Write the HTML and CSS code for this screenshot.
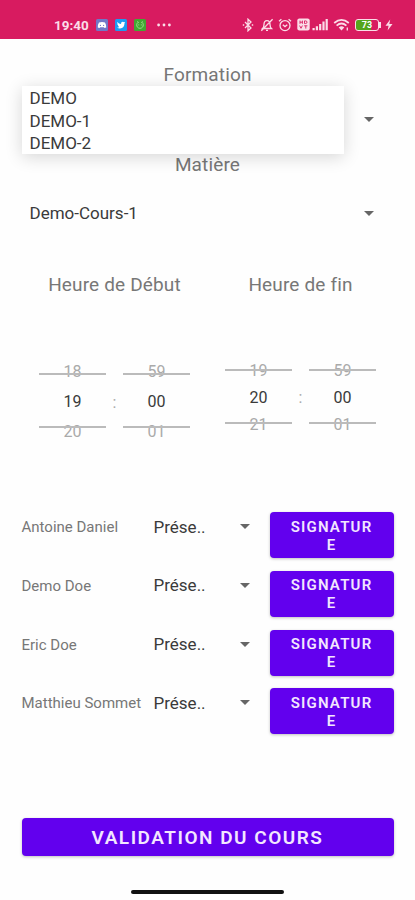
FILE: index.html
```html
<!DOCTYPE html>
<html lang="fr">
<head>
    <meta charset="UTF-8">
    <meta name="viewport" content="width=device-width, initial-scale=1.0">
    <title>Validation du cours</title>
    <link rel="stylesheet" href="styles.css">
</head>
<body>
    <div class="status-bar">
        <div class="status-left">
            <span class="clock">19:40</span>
            <svg class="app-icon" viewBox="0 0 12 12">
                <rect width="12" height="12" rx="1.5" fill="#7078c8"/>
                <path d="M3 3.6Q6 2.6 9 3.6Q10.4 6 10.2 8.6L8.5 9L7.8 8.2H4.2L3.5 9L1.8 8.6Q1.6 6 3 3.6Z" fill="#fff"/>
                <circle cx="4.4" cy="6.4" r=".6" fill="#7078c8"/>
                <circle cx="7.6" cy="6.4" r=".6" fill="#7078c8"/>
            </svg>
            <svg class="app-icon" viewBox="0 0 12 12">
                <rect width="12" height="12" rx="1.5" fill="#1d9bf0"/>
                <path d="M2.3 3Q3.8 4.9 6 4.9Q5.9 2.7 7.7 2.7Q8.5 2.7 9 3.3L10.2 3L9.5 4.3Q9.5 9.4 5 9.5Q3.3 9.5 2 8.7Q3.5 8.7 4.3 8Q3.1 7.6 2.9 6.6L3.5 6.5Q2.3 5.8 2.3 4.8L2.8 5Q1.8 4 2.3 3Z" fill="#fff"/>
            </svg>
            <svg class="app-icon" viewBox="0 0 12 12">
                <rect width="12" height="12" rx="1.5" fill="#43a832"/>
                <path d="M4 3.4A3.3 3.3 0 1 0 8 3.4M3.5 2.3L4.5 3.8M8.5 2.3L7.5 3.8M4.7 5.4V6.4M7.3 5.4V6.4" fill="none" stroke="#a5dc95" stroke-width=".9"/>
            </svg>
            <svg class="dots" viewBox="0 0 14 4">
                <circle cx="1.6" cy="2" r="1.4"/>
                <circle cx="7" cy="2" r="1.4"/>
                <circle cx="12.4" cy="2" r="1.4"/>
            </svg>
        </div>
        <div class="status-right">
            <svg class="line-icon bluetooth" viewBox="0 0 12 14">
                <path d="M3 4L9 10L6 12.8V1.2L9 4L3 10"/>
                <path d="M.8 7H2.2M9.8 7H11.2" stroke-width="1.6"/>
            </svg>
            <svg class="line-icon bell" viewBox="0 0 14 14">
                <path d="M2.5 10.5Q4 9 4 6.5Q4 2.6 7 2.6Q10 2.6 10 6.5Q10 9 11.5 10.5ZM6 12.4H8M12.6 1.2L1.3 12.8"/>
            </svg>
            <svg class="line-icon alarm" viewBox="0 0 14 14">
                <circle cx="7" cy="7.6" r="5"/>
                <path d="M1 3.2L3.4 1.2M13 3.2L10.6 1.2M4.8 6.7L7 8.6L9.3 6.7"/>
            </svg>
            <svg class="volte" viewBox="0 0 13 13">
                <rect x=".3" y=".5" width="12.4" height="12" rx="2" fill="#fbdde8"/>
                <path d="M3 2.6V5.8M5.4 2.6V5.8M3 4.2H5.4M7.5 2.9H8.5Q10 2.9 10 4.2Q10 5.5 8.5 5.5H7.5ZM2.6 7.6L4 10.3L5.4 7.6M7.2 7.8H10.4M8.8 7.8V10.6" fill="none" stroke="#d81b60" stroke-width=".9"/>
            </svg>
            <svg class="signal" viewBox="0 0 16 13">
                <path d="M.5 10H2.7V12.3H.5ZM3.8 8.2H6V12.3H3.8ZM7.1 6H9.3V12.3H7.1ZM10.4 3.6H12.6V12.3H10.4ZM13.6 1H15.8V12.3H13.6Z"/>
            </svg>
            <svg class="line-icon wifi" viewBox="0 0 18 14">
                <path d="M1.2 5Q8.5 -1.2 15.8 5M3.6 7.6Q8.5 3.4 13.4 7.6" stroke-width="1.8"/>
                <path d="M5.7 9.4Q8.5 7.2 11.3 9.4L8.5 12.4Z" fill="#fbdde8" stroke="none"/>
                <path d="M14.3 9.5V12.5"/>
            </svg>
            <div class="battery"><span>73</span></div>
            <svg class="bolt" viewBox="0 0 8 12">
                <path d="M5.2 .6L.5 6.8H3.6L2.6 11.4L7.5 5H4.3Z"/>
            </svg>
        </div>
    </div>

    <div class="content">
        <div class="label">Formation</div>
        <div class="spinner formation">
            <div class="dropdown">
                <div>DEMO</div>
                <div>DEMO-1</div>
                <div>DEMO-2</div>
            </div>
            <i class="arrow"></i>
        </div>

        <div class="label">Matière</div>
        <div class="spinner matiere">
            <span>Demo-Cours-1</span>
            <i class="arrow"></i>
        </div>

        <div class="times">
            <div class="time start">
                <div class="label">Heure de Début</div>
                <div class="picker">
                    <div class="wheel"><span>18</span><b>19</b><span>20</span></div>
                    <div class="colon">:</div>
                    <div class="wheel"><span>59</span><b>00</b><span>01</span></div>
                </div>
            </div>
            <div class="time end">
                <div class="label">Heure de fin</div>
                <div class="picker">
                    <div class="wheel"><span>19</span><b>20</b><span>21</span></div>
                    <div class="colon">:</div>
                    <div class="wheel"><span>59</span><b>00</b><span>01</span></div>
                </div>
            </div>
        </div>

        <div class="students">
            <div class="student">
                <span class="name">Antoine Daniel</span>
                <div class="presence">Prése..<i class="arrow"></i></div>
                <button>SIGNATURE</button>
            </div>
            <div class="student">
                <span class="name">Demo Doe</span>
                <div class="presence">Prése..<i class="arrow"></i></div>
                <button>SIGNATURE</button>
            </div>
            <div class="student">
                <span class="name">Eric Doe</span>
                <div class="presence">Prése..<i class="arrow"></i></div>
                <button>SIGNATURE</button>
            </div>
            <div class="student">
                <span class="name">Matthieu Sommet</span>
                <div class="presence">Prése..<i class="arrow"></i></div>
                <button>SIGNATURE</button>
            </div>
        </div>

        <button class="validate">VALIDATION DU COURS</button>
    </div>

    <div class="home-bar"></div>
</body>
</html>
```
FILE: styles.css
```css
* {
    box-sizing: border-box;
}
body {
    font-family: Roboto, sans-serif;
    background: #fefefe;
    color: #3a3a3a;
    margin: 0;
    height: 900px;
    display: flex;
    flex-direction: column;
    align-items: center;
    overflow: hidden;
}

/* Status bar */
.status-bar {
    width: 100%;
    height: 39px;
    flex: none;
    background: #d81b60;
    display: flex;
    justify-content: space-between;
    padding: 10px 22px 0 54px;
}
.status-left, .status-right {
    display: flex;
    align-items: center;
    height: 29px;
}
.clock {
    width: 42px;
    font-size: 13.5px;
    font-weight: bold;
    color: #fbdde8;
}
.app-icon {
    width: 12px;
    height: 12px;
    margin-right: 7px;
}
.dots {
    width: 14px;
    height: 4px;
    margin-left: 4px;
    fill: #fbdde8;
}
.line-icon {
    fill: none;
    stroke: #fbdde8;
    stroke-width: 1.3;
}
.bluetooth {
    width: 12px;
    height: 14px;
    margin-right: 6px;
}
.bell {
    width: 14px;
    height: 14px;
    margin-right: 4px;
}
.alarm {
    width: 14px;
    height: 14px;
    margin-right: 5px;
}
.volte {
    width: 13px;
    height: 13px;
    margin-right: 2px;
}
.signal {
    width: 16px;
    height: 13px;
    margin-right: 5px;
    fill: #fbdde8;
}
.wifi {
    width: 18px;
    height: 14px;
    margin-right: 4px;
}
.battery {
    position: relative;
    width: 24px;
    height: 12px;
    border: 1.5px solid #fbdde8;
    border-radius: 3px;
    background: linear-gradient(to right, #55a51c 70%, #d81b60 70%);
    margin-right: 6px;
    display: flex;
    align-items: center;
    justify-content: center;
    font-size: 9px;
    font-weight: bold;
    color: #fff;
}
.battery::after {
    content: "";
    position: absolute;
    right: -3px;
    top: 2px;
    width: 2px;
    height: 6px;
    background: #fbdde8;
}
.bolt {
    width: 8px;
    height: 12px;
    fill: #fbdde8;
}

/* Form */
.content {
    width: 372px;
    padding-top: 23px;
    flex: 1;
    display: flex;
    flex-direction: column;
}
.label {
    height: 24px;
    line-height: 26px;
    font-size: 19px;
    letter-spacing: 0.15px;
    text-align: center;
    color: #777;
}
.spinner {
    display: flex;
    align-items: center;
    justify-content: space-between;
    padding-right: 20px;
    font-size: 17px;
}
.formation {
    position: relative;
    height: 66px;
    justify-content: flex-end;
}
.dropdown {
    position: absolute;
    left: 0;
    top: 0;
    width: 322px;
    height: 68px;
    padding: 1px 0 0 8px;
    background: #fff;
    line-height: 22.7px;
    box-shadow: 0 3px 16px rgba(0, 0, 0, 0.16);
}
.matiere {
    height: 74px;
    padding-left: 8px;
}
.arrow {
    border: 5px solid transparent;
    border-top-color: #666;
    border-bottom: 0;
}

/* Time pickers */
.times {
    display: flex;
    height: 262px;
    padding-top: 22px;
}
.time {
    flex: 1;
}
.picker {
    display: flex;
    justify-content: center;
}
.start .picker, .end .picker {
    margin-top: 61px;
}
.wheel {
    position: relative;
    width: 67px;
    display: flex;
    flex-direction: column;
    text-align: center;
    font-size: 16px;
    line-height: 30px;
    color: #aaa;
}
.end .wheel {
    line-height: 27px;
}
.wheel b {
    font-weight: 400;
    color: #3a3a3a;
}
.wheel::before {
    content: "";
    position: absolute;
    left: 0;
    right: 0;
    top: 16px;
    height: 51px;
    border: solid #bbb;
    border-width: 2px 0;
}
.end .wheel::before {
    top: 12px;
}
.colon {
    width: 17px;
    align-self: center;
    text-align: center;
    color: #aaa;
}

/* Students */
.students {
    display: flex;
    flex-direction: column;
    gap: 12.8px;
}
.student {
    display: grid;
    grid-template-columns: 132px 116px 124px;
}
.name {
    padding-top: 6px;
    font-size: 15px;
    line-height: 18px;
    white-space: nowrap;
    color: #777;
}
.presence {
    display: flex;
    justify-content: space-between;
    align-items: center;
    height: 29px;
    padding-right: 20px;
    font-size: 17px;
}
button {
    height: 46px;
    padding: 1px 18px 0;
    border: none;
    border-radius: 4px;
    background: #6200ee;
    color: #f3e6ff;
    font-family: Roboto, sans-serif;
    font-size: 15px;
    font-weight: 600;
    letter-spacing: 1.2px;
    line-height: 18px;
    word-break: break-all;
    box-shadow: 0 1px 3px rgba(0, 0, 0, 0.25);
}
.validate {
    height: 38px;
    margin-top: 84px;
    font-size: 19px;
    letter-spacing: 1.5px;
}
.home-bar {
    width: 153px;
    height: 4px;
    flex: none;
    margin-bottom: 6px;
    border-radius: 2px;
    background: #111;
}
```
